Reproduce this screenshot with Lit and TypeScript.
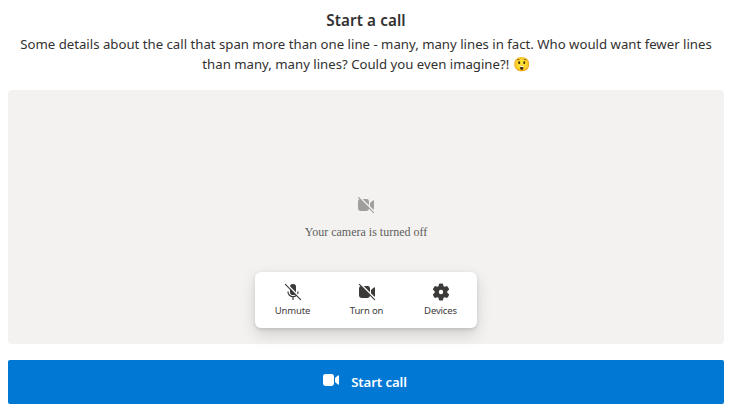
import { LitElement, html, css, svg } from "lit";
import { customElement } from "lit/decorators.js";

const camera = svg`
  <path d="M2.4 2H8.6A2.4 2.4 0 0 1 11 4.400V11.600A2.400 2.400 0 0 1 8.600 14H2.400A2.400 2.400 0 0 1 0 11.600V4.400A2.400 2.400 0 0 1 2.400 2Z"/>
  <path d="M12 6 14.900 3.500Q16 2.800 16 4V12Q16 13.200 14.900 12.500L12 10Z"/>`;

const slash = svg`
  <path class="cut" d="M0-1.600 17.600 16" />
  <path class="slash" d="M.4.4 15.600 15.600" />`;

@customElement("app-root")
export class AppRoot extends LitElement {
  static styles = css`
    :host {
      display: flex;
      flex-direction: column;
      box-sizing: border-box;
      height: 412px;
      padding: 8px;
      background: #fff;
      color: #323130;
      font-family: "Noto Sans", "Open Sans", sans-serif;
    }
    svg { display: block; fill: currentColor; }
    header { height: 82px; text-align: center; }
    .title { font-size: 15.2px; font-weight: 600; line-height: 24px; letter-spacing: 0.12px; }
    .details { font-size: 13.2px; line-height: 20px; margin-top: 2px; white-space: nowrap; }
    .line { display: block; height: 20px; }
    .emoji { font-size: 14px; line-height: 1; }
    .preview {
      box-sizing: border-box;
      height: 254px;
      padding: 107px 0 16px;
      border-radius: 4px;
      background: #f3f2f1;
      display: flex;
      flex-direction: column;
      align-items: center;
    }
    .off { color: #a19f9d; --cut: #f3f2f1; }
    .message {
      margin-top: 11px;
      font: 12px/16px "Liberation Serif", serif;
      color: #605e5c;
    }
    .bar {
      box-sizing: border-box;
      display: flex;
      width: 222px;
      height: 56px;
      margin-top: auto;
      padding-left: 1px;
      border-radius: 6px;
      background: #fff;
      box-shadow: 0 6.4px 14.4px rgba(0, 0, 0, 0.132), 0 1.2px 3.6px rgba(0, 0, 0, 0.108);
      --cut: #fff;
      color: #3b3a39;
    }
    .item {
      flex: none;
      width: 74px;
      display: flex;
      flex-direction: column;
      align-items: center;
      padding-top: 11px;
      font-size: 9.5px;
      line-height: 14px;
    }
    .label { margin: 3px 1px 0 0; letter-spacing: -0.15px; white-space: nowrap; }
    .cut { stroke: var(--cut); stroke-width: 1.5; }
    .slash { stroke: currentColor; stroke-width: 1.1; stroke-linecap: round; }
    .start {
      height: 44px;
      margin-top: 16px;
      padding-right: 2px;
      border-radius: 2px;
      background: #0078d4;
      color: #fff;
      display: flex;
      justify-content: center;
      align-items: center;
      gap: 12px;
      font-size: 13.2px;
      font-weight: 600;
      letter-spacing: -0.1px;
    }
    .start svg { margin-top: -4px; }
    .start span { margin-top: -1px; }
  `;

  render() {
    return html`
      <header>
        <div class="title">Start a call</div>
        <div class="details">
          <span class="line">Some details about the call that span more than one line - many, many lines in fact. Who would want fewer lines</span>
          <span class="line">than many, many lines? Could you even imagine?! <span class="emoji">😲</span></span>
        </div>
      </header>
      <section class="preview">
        <div class="off"><svg width="16" height="16" viewBox="0 0 16 16">${camera}${slash}</svg></div>
        <div class="message">Your camera is turned off</div>
        <div class="bar">
          <div class="item">
            <svg width="18" height="18" viewBox="-1 -1 18 18">
              <rect x="5" y="0" width="6" height="11" rx="2.800" />
              <path d="M3 7.500V8A5 4.600 0 0 0 13 8V7.500M8 12.800V16" fill="none" stroke="currentColor" stroke-width="1.200" />
              ${slash}
            </svg>
            <span class="label">Unmute</span>
          </div>
          <div class="item">
            <svg width="18" height="18" viewBox="-1 -1 18 18">${camera}${slash}</svg>
            <span class="label">Turn on</span>
          </div>
          <div class="item">
            <svg width="18" height="18" viewBox="0 0 18 18">
              <path fill-rule="evenodd" d="M7 .8Q9 .1 11 .8L11.500 3.200 12.600 3.800 15 3Q16.600 4.500 17.200 6.600L15.300 8.300V9.700L17.200 11.400Q16.600 13.500 15 15L12.600 14.200 11.500 14.800 11 17.200Q9 17.900 7 17.200L6.500 14.800 5.400 14.200 3 15Q1.400 13.500.8 11.400L2.700 9.700V8.300L.8 6.600Q1.400 4.500 3 3L5.400 3.800 6.500 3.200ZM9 6.800A2.200 2.200 0 1 0 9 11.200 2.200 2.200 0 1 0 9 6.800Z" />
            </svg>
            <span class="label">Devices</span>
          </div>
        </div>
      </section>
      <div class="start" role="button">
        <svg width="16" height="16" viewBox="0 0 16 16">${camera}</svg>
        <span>Start call</span>
      </div>
    `;
  }
}
